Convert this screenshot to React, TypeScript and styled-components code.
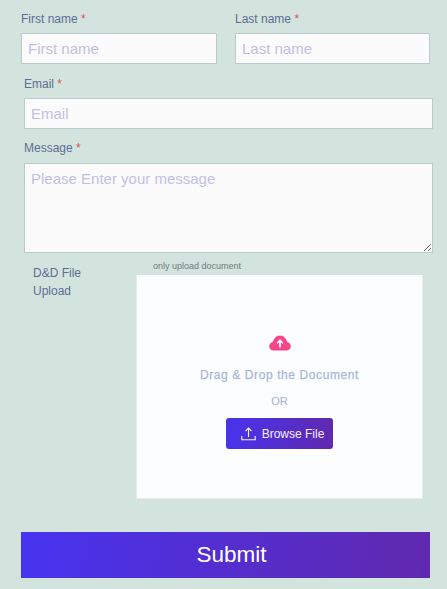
import React from 'react';
import styled, { createGlobalStyle } from 'styled-components';

const Global = createGlobalStyle`
  html, body { margin: 0; padding: 0; background: #d2e4dd; }
  * { box-sizing: border-box; }
  body { font-family: "Liberation Sans", Arial, sans-serif; overflow: hidden; }
`;

const Page = styled.form`
  width: 447px;
  height: 589px;
  padding-top: 11px;
  display: flex;
  flex-direction: column;
`;

const NameRow = styled.div`
  display: flex;
  gap: 18px;
  padding: 0 17px 0 21px;
`;

const NameField = styled.div`
  display: flex;
  flex-direction: column;
  width: ${p => p.$w}px;
`;

const WideField = styled.div`
  display: flex;
  flex-direction: column;
  margin: 12px 14px 0 24px;
`;

const Label = styled.label`
  font-size: 12px;
  line-height: 15px;
  height: 22px;
  padding-top: ${p => (p.$nudge ? 1 : 0)}px;
  color: #5f6d96;
`;

const Star = styled.span`
  color: #e8505b;
`;

const Input = styled.input`
  height: 31px;
  width: 100%;
  padding: 0 6px;
  background: #fbfbfb;
  border: 1px solid #b9cccd;
  border-radius: 0;
  font-family: inherit;
  font-size: 15px;
  outline: none;
  &::placeholder { color: #c2bfe4; opacity: 1; }
`;

const TextArea = styled.textarea`
  display: block;
  height: 90px;
  width: 100%;
  padding: 6px;
  background: #fbfbfb;
  border: 1px solid #b9cccd;
  border-radius: 0;
  font-family: inherit;
  font-size: 15px;
  outline: none;
  &::placeholder { color: #c2bfe4; opacity: 1; }
`;

const UploadRow = styled.div`
  display: flex;
  margin-top: 8px;
  padding-left: 33px;
`;

const UploadLabel = styled.div`
  width: 103px;
  padding-top: 3px;
  font-size: 12px;
  line-height: 18px;
  color: #5f6d96;
`;

const UploadColumn = styled.div`
  width: 287px;
  display: flex;
  flex-direction: column;
`;

const Hint = styled.div`
  height: 14px;
  padding-left: 17px;
  font-size: 9px;
  line-height: 11px;
  color: #6f7b80;
`;

const DropZone = styled.div`
  height: 224px;
  background: #fcfdff;
  border: 1px solid #e6ecec;
  border-top: 0;
  display: flex;
  flex-direction: column;
  align-items: center;
  padding-top: 60px;
`;

const DropTitle = styled.div`
  margin-top: 17px;
  font-size: 12px;
  font-weight: 400;
  line-height: 14px;
  letter-spacing: 0.6px;
  -webkit-text-stroke: 0.25px #a9b7d8;
  color: #a9b7d8;
`;

const Or = styled.div`
  margin-top: 13px;
  font-size: 11px;
  line-height: 13px;
  color: #a3b0cf;
`;

const Browse = styled.button`
  margin-top: 10px;
  width: 107px;
  height: 31px;
  border: 0;
  border-radius: 3px;
  background: linear-gradient(100deg, #4833ee, #6029ae);
  color: #f4f1ff;
  font-family: inherit;
  font-size: 12px;
  display: flex;
  align-items: center;
  justify-content: center;
  gap: 6px;
  padding: 0 0 0 6px;
`;

const Submit = styled.button`
  margin: 33px 17px 0 21px;
  height: 46px;
  padding: 0 0 0 12px;
  border: 0;
  background: linear-gradient(100deg, #4733f0, #6029ae);
  color: #fff;
  font-family: inherit;
  font-size: 22.5px;
`;

const CloudIcon = () => (
  <svg width="22" height="16" viewBox="0 0 22 16" aria-hidden="true">
    <path fill="#f6468a" d="M4.6 15.5C2 15.5.2 13.7.2 11.3c0-2.2 1.6-3.9 3.6-4.2C4.6 3.3 7.5.4 11 .4s6.4 2.9 7.2 6.7c2 .3 3.6 2 3.6 4.2 0 2.4-1.8 4.2-4.4 4.2H4.6z" />
    <path fill="none" stroke="#fff" strokeWidth="1.6" d="M11 12.6V5.6M8.2 8.2 11 5.4l2.8 2.8" />
  </svg>
);

const UploadIcon = () => (
  <svg width="15" height="14" viewBox="0 0 15 14" aria-hidden="true" fill="none" stroke="#f4f1ff" strokeWidth="1.1">
    <path d="M7.5 10V1.2M4.6 4 7.5 1.1 10.4 4" />
    <path d="M.8 9v3.8h13.4V9" />
  </svg>
);

export default function App() {
  return (
    <>
      <Global />
      <Page>
        <NameRow>
          <NameField $w={196}>
            <Label $nudge>First name <Star>*</Star></Label>
            <Input placeholder="First name" />
          </NameField>
          <NameField $w={195}>
            <Label $nudge>Last name <Star>*</Star></Label>
            <Input placeholder="Last name" />
          </NameField>
        </NameRow>
        <WideField>
          <Label $nudge>Email <Star>*</Star></Label>
          <Input placeholder="Email" />
        </WideField>
        <WideField>
          <Label>Message <Star>*</Star></Label>
          <TextArea placeholder="Please Enter your message" />
        </WideField>
        <UploadRow>
          <UploadLabel>D&amp;D File<br />Upload</UploadLabel>
          <UploadColumn>
            <Hint>only upload document</Hint>
            <DropZone>
              <CloudIcon />
              <DropTitle>Drag &amp; Drop the Document</DropTitle>
              <Or>OR</Or>
              <Browse type="button"><UploadIcon />Browse File</Browse>
            </DropZone>
          </UploadColumn>
        </UploadRow>
        <Submit type="button">Submit</Submit>
      </Page>
    </>
  );
}
